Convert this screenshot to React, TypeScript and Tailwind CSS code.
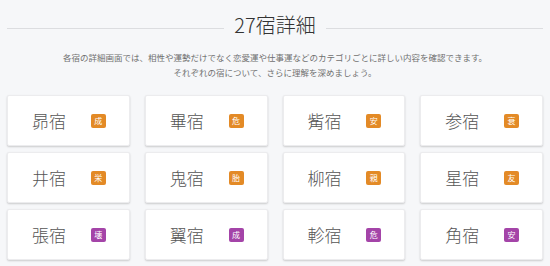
import React from "react";

const items: { name: string; badge: string; color: "o" | "p" }[] = [
  { name: "昴宿", badge: "成", color: "o" },
  { name: "畢宿", badge: "危", color: "o" },
  { name: "觜宿", badge: "安", color: "o" },
  { name: "参宿", badge: "衰", color: "o" },
  { name: "井宿", badge: "栄", color: "o" },
  { name: "鬼宿", badge: "胎", color: "o" },
  { name: "柳宿", badge: "親", color: "o" },
  { name: "星宿", badge: "友", color: "o" },
  { name: "張宿", badge: "壊", color: "p" },
  { name: "翼宿", badge: "成", color: "p" },
  { name: "軫宿", badge: "危", color: "p" },
  { name: "角宿", badge: "安", color: "p" },
];

export default function App() {
  return (
    <div
      className="w-[550px] h-[266px] overflow-hidden bg-[#f6f7f9] px-[7px]"
      style={{ fontFamily: '"Noto Sans CJK JP", "Noto Sans", sans-serif' }}
    >
      <div className="flex items-center gap-[10px] pt-[10px]">
        <div className="flex-1 h-px bg-[#dcdde0] mt-[6px]" />
        <h1 className="text-[20px] leading-[30px] text-[#333333] font-light">27宿詳細</h1>
        <div className="flex-1 h-px bg-[#dcdde0] mt-[6px]" />
      </div>
      <p className="mt-[10px] text-center text-[8.5px] leading-[15px] text-[#707070]">
        各宿の詳細画面では、相性や運勢だけでなく恋愛運や仕事運などのカテゴリごとに詳しい内容を確認できます。
        <br />
        それぞれの宿について、さらに理解を深めましょう。
      </p>
      <div className="mt-[15px] grid grid-cols-4 gap-x-[15px] gap-y-[6px]">
        {items.map((it) => (
          <div
            key={it.name}
            className="h-[51px] bg-white rounded-[2px] border border-[#ececee] shadow-[0_1px_2px_rgba(0,0,0,0.18)] flex items-center justify-between pl-[24px] pr-[23px]"
          >
            <span className="text-[17px] leading-none text-[#555555] font-light">{it.name}</span>
            <span
              className={
                "w-[15px] h-[14px] rounded-[2px] flex items-center justify-center text-[8px] leading-none text-white " +
                (it.color === "o" ? "bg-[#e38a26]" : "bg-[#a444a8]")
              }
            >
              {it.badge}
            </span>
          </div>
        ))}
      </div>
    </div>
  );
}
